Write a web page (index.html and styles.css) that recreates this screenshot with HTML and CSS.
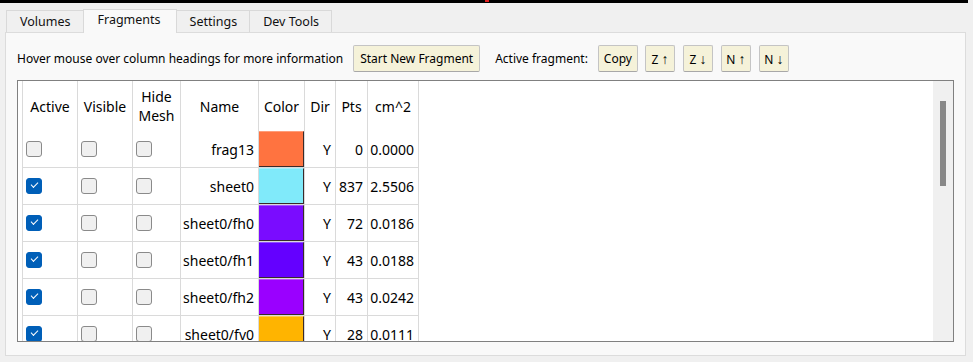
FILE: index.html
```html
<!DOCTYPE html>
<html>
<head>
<meta charset="utf-8">
<link rel="stylesheet" href="styles.css">
</head>
<body>
<div class="topbar"><span class="mark"></span></div>
<div class="tabs">
  <div class="tab">Volumes</div>
  <div class="tab selected">Fragments</div>
  <div class="tab">Settings</div>
  <div class="tab">Dev Tools</div>
</div>
<div class="panel">
  <div class="toolbar">
    <span class="hint">Hover mouse over column headings for more information</span>
    <button class="btn wide">Start New Fragment</button>
    <span class="label">Active fragment:</span>
    <button class="btn copy">Copy</button>
    <button class="btn arrow">Z <span class="ar">↑</span></button>
    <button class="btn arrow">Z <span class="ar">↓</span></button>
    <button class="btn arrow">N <span class="ar">↑</span></button>
    <button class="btn arrow">N <span class="ar">↓</span></button>
  </div>
  <div class="frame">
    <div class="grid">
      <div class="h">Active</div>
      <div class="h">Visible</div>
      <div class="h">Hide<br>Mesh</div>
      <div class="h">Name</div>
      <div class="h">Color</div>
      <div class="h">Dir</div>
      <div class="h">Pts</div>
      <div class="h">cm^2</div>

      <div class="c"><span class="cb"></span></div>
      <div class="c"><span class="cb"></span></div>
      <div class="c"><span class="cb"></span></div>
      <div class="c r">frag13</div>
      <div class="c sw"><span class="swatch" style="background:#ff7340"></span></div>
      <div class="c r">Y</div>
      <div class="c r">0</div>
      <div class="c r">0.0000</div>

      <div class="c"><span class="cb on"></span></div>
      <div class="c"><span class="cb"></span></div>
      <div class="c"><span class="cb"></span></div>
      <div class="c r">sheet0</div>
      <div class="c sw"><span class="swatch" style="background:#80eafa"></span></div>
      <div class="c r">Y</div>
      <div class="c r">837</div>
      <div class="c r">2.5506</div>

      <div class="c"><span class="cb on"></span></div>
      <div class="c"><span class="cb"></span></div>
      <div class="c"><span class="cb"></span></div>
      <div class="c r">sheet0/fh0</div>
      <div class="c sw"><span class="swatch" style="background:#7a0cff"></span></div>
      <div class="c r">Y</div>
      <div class="c r">72</div>
      <div class="c r">0.0186</div>

      <div class="c"><span class="cb on"></span></div>
      <div class="c"><span class="cb"></span></div>
      <div class="c"><span class="cb"></span></div>
      <div class="c r">sheet0/fh1</div>
      <div class="c sw"><span class="swatch" style="background:#6400ff"></span></div>
      <div class="c r">Y</div>
      <div class="c r">43</div>
      <div class="c r">0.0188</div>

      <div class="c"><span class="cb on"></span></div>
      <div class="c"><span class="cb"></span></div>
      <div class="c"><span class="cb"></span></div>
      <div class="c r">sheet0/fh2</div>
      <div class="c sw"><span class="swatch" style="background:#9a00ff"></span></div>
      <div class="c r">Y</div>
      <div class="c r">43</div>
      <div class="c r">0.0242</div>

      <div class="c"><span class="cb on"></span></div>
      <div class="c"><span class="cb"></span></div>
      <div class="c"><span class="cb"></span></div>
      <div class="c r">sheet0/fv0</div>
      <div class="c sw"><span class="swatch" style="background:#ffb400"></span></div>
      <div class="c r">Y</div>
      <div class="c r">28</div>
      <div class="c r">0.0111</div>
    </div>
    <div class="scrollbar"><div class="thumb"></div></div>
  </div>
</div>
</body>
</html>
```
FILE: styles.css
```css
* { box-sizing: border-box; }
html, body { margin: 0; padding: 0; }
body {
  background: #f0f0f0;
  font-family: "Noto Sans", "Open Sans", sans-serif;
  color: #000;
  width: 973px;
  height: 362px;
  overflow: hidden;
}
.topbar {
  height: 3px;
  width: 968px;
  background: #000;
  position: relative;
}
.topbar .mark {
  position: absolute;
  left: 485px;
  top: 0;
  width: 4px;
  height: 2px;
  background: #e02020;
}
.tabs {
  display: flex;
  margin: 7px 0 0 6px;
  height: 22px;
  align-items: flex-end;
}
.tab {
  height: 22px;
  padding: 0 12px 0 13px;
  border: 1px solid #d9d9d9;
  border-bottom: none;
  background: #f0f0f0;
  font-size: 12.5px;
  line-height: 21px;
  margin-left: -1px;
  color: #111;
}
.tab:first-child { margin-left: 0; }
.tab.selected {
  height: 24px;
  margin-bottom: -1px;
  background: #f9f9f9;
  padding: 0 15px 0 14px;
  position: relative;
  z-index: 1;
  line-height: 20px;
}
.panel {
  width: 961px;
  height: 324px;
  margin-left: 5px;
  background: #f9f9f9;
  border: 1px solid #dcdcdc;
  padding: 12px 0 0 11px;
}
.toolbar {
  display: flex;
  align-items: center;
  height: 27px;
  font-size: 12px;
}
.hint { margin-right: 10px; white-space: nowrap; }
.label { margin: 0 10px 0 15px; white-space: nowrap; }
.btn {
  font-family: inherit;
  font-size: 12px;
  height: 27px;
  background: #f5f2d9;
  border: 1px solid #c4c4c4;
  border-bottom-color: #a8a8a8;
  border-radius: 2px;
  padding: 0;
  color: #000;
  margin: 0 8px 0 0;
  white-space: nowrap;
  flex: none;
}
.btn.wide { width: 127px; margin-right: 0; }
.btn.copy { width: 40px; margin-right: 7px; }
.btn.arrow { width: 30px; }
.ar { font-size: 14px; }
.frame {
  margin-top: 8px;
  width: 937px;
  height: 262px;
  border: 1px solid #808080;
  background: #fff;
  display: flex;
  overflow: hidden;
}
.grid {
  display: grid;
  grid-template-columns: 55px 55px 48px 78px 46px 31px 32px 51px;
  grid-auto-rows: 37px;
  grid-template-rows: 50px;
  margin-left: 4px;
  border-left: 1px solid #dadada;
  align-self: flex-start;
  font-size: 14px;
  flex: none;
}
.h {
  border-right: 1px solid #dadada;
  display: flex;
  align-items: center;
  justify-content: center;
  text-align: center;
  line-height: 19px;
}
.c {
  border-right: 1px solid #dadada;
  border-bottom: 1px solid #dadada;
  display: flex;
  align-items: center;
  padding: 0 3px;
}
.c:first-child { padding-left: 4px; }
.c.r { justify-content: flex-end; padding-right: 4px; }
.c.sw { padding: 0; align-items: stretch; }
.swatch {
  flex: 1;
  border-right: 1px solid #3a2a2a;
  border-bottom: 1px solid #3a2a2a;
  border-top: 1px solid rgba(255,255,255,0.3);
}
.cb {
  width: 16px;
  height: 16px;
  border: 1px solid #8a8a8a;
  border-radius: 3px;
  background: #f0f0f0;
  position: relative;
}
.cb.on {
  background: #005fb8;
  border-color: #005fb8;
}
.cb.on::after {
  content: "";
  position: absolute;
  left: 4px;
  top: 3px;
  width: 6px;
  height: 3px;
  border-left: 1.3px solid #fff;
  border-bottom: 1.3px solid #fff;
  transform: rotate(-45deg);
}
.scrollbar {
  margin-left: auto;
  width: 20px;
  background: #f0f0f0;
  padding: 20px 0 0 7px;
}
.thumb {
  width: 6px;
  height: 85px;
  background: #888;
}
```
